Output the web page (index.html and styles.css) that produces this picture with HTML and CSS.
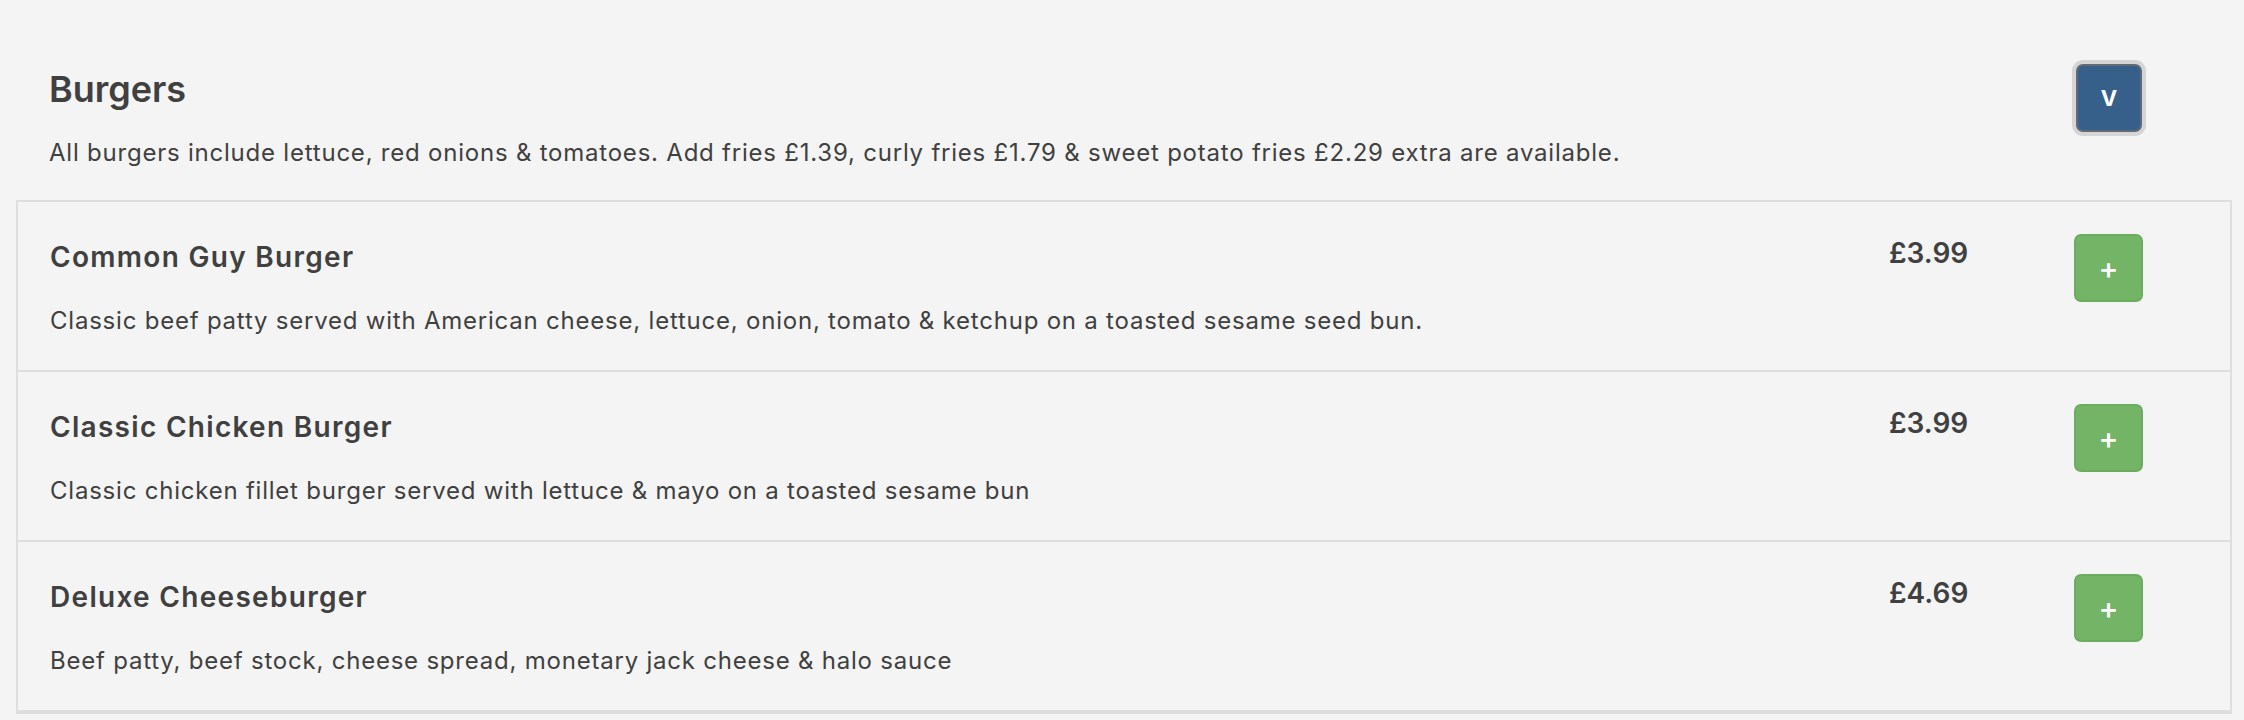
FILE: index.html
```html
<!DOCTYPE html>
<html lang="en">
<head>
<meta charset="utf-8">
<title>Burgers</title>
<link rel="stylesheet" href="styles.css">
</head>
<body>
<div class="menu">
  <div class="section-head">
    <div class="head-text">
      <h3 class="section-title">Burgers</h3>
      <p class="section-note">All burgers include lettuce, red onions &amp; tomatoes. Add fries £1.39, curly fries £1.79 &amp; sweet potato fries £2.29 extra are available.</p>
    </div>
    <button class="btn-toggle">V</button>
  </div>
  <ul class="items">
    <li class="item">
      <div class="item-main">
        <h4 class="item-name">Common Guy Burger</h4>
        <p class="item-desc">Classic beef patty served with American cheese, lettuce, onion, tomato &amp; ketchup on a toasted sesame seed bun.</p>
      </div>
      <div class="item-price">£3.99</div>
      <button class="btn-add">+</button>
    </li>
    <li class="item">
      <div class="item-main">
        <h4 class="item-name">Classic Chicken Burger</h4>
        <p class="item-desc">Classic chicken fillet burger served with lettuce &amp; mayo on a toasted sesame bun</p>
      </div>
      <div class="item-price">£3.99</div>
      <button class="btn-add">+</button>
    </li>
    <li class="item">
      <div class="item-main">
        <h4 class="item-name">Deluxe Cheeseburger</h4>
        <p class="item-desc">Beef patty, beef stock, cheese spread, monetary jack cheese &amp; halo sauce</p>
      </div>
      <div class="item-price">£4.69</div>
      <button class="btn-add">+</button>
    </li>
  </ul>
</div>
</body>
</html>
```

FILE: styles.css
```css
html, body {
  margin: 0;
  padding: 0;
  background: #f4f4f4;
}

body {
  font-family: Inter, "Liberation Sans", Arial, sans-serif;
  color: #404040;
}

.menu {
  padding: 0 12px 0 16px;
}

.section-head {
  display: flex;
  align-items: flex-start;
  justify-content: space-between;
  padding: 64px 90px 0 33px;
  height: 136px;
}

.section-title {
  margin: 5px 0 0;
  font-size: 36px;
  line-height: 40px;
  font-weight: 600;
}

.section-note {
  margin: 29px 0 0;
  font-size: 24px;
  line-height: 30px;
  letter-spacing: 0.78px;
}

.btn-toggle {
  width: 66px;
  height: 68px;
  margin-top: 0;
  background: #365f8a;
  border: 2px solid #626a75;
  border-radius: 7px;
  box-shadow: 0 0 0 4px #d5d5d5;
  color: #fff;
  font-family: Inter, "Liberation Sans", Arial, sans-serif;
  font-size: 22px;
  font-weight: 700;
  padding: 0;
}

.items {
  list-style: none;
  margin: 0;
  padding: 0;
  border: 2px solid #dedede;
  border-bottom-width: 4px;
}

.item {
  display: grid;
  grid-template-columns: 1fr 185px 69px;
  align-items: start;
  padding: 32px 87px 34px 32px;
  border-top: 2px solid #dedede;
}

.item:first-child {
  border-top: 0;
}

.item-name {
  margin: 7px 0 0;
  font-size: 28px;
  line-height: 32px;
  font-weight: 600;
  letter-spacing: 1.3px;
}

.item-desc {
  margin: 33px 0 0;
  font-size: 24px;
  line-height: 30px;
  letter-spacing: 0.78px;
}

.item-price {
  margin-top: 4px;
  font-size: 28px;
  line-height: 30px;
  font-weight: 600;
}

.btn-add {
  width: 69px;
  height: 68px;
  padding: 0;
  background: #73b467;
  border: 2px solid #6aad5e;
  border-radius: 7px;
  color: #fff;
  font-family: Inter, "Liberation Sans", Arial, sans-serif;
  font-size: 30px;
  font-weight: 500;
}
```
